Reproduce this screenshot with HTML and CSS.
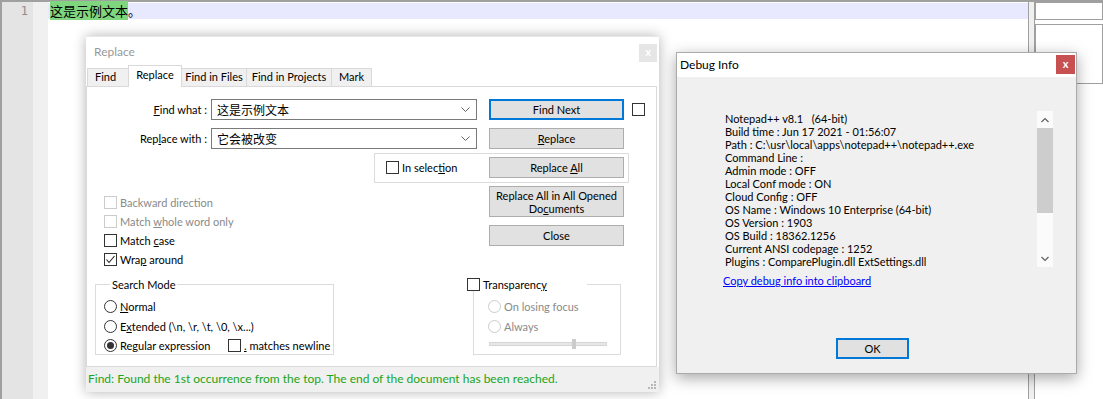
FILE: index.html
```html
<!DOCTYPE html>
<html lang="en">
<head>
  <meta charset="UTF-8">
  <title>Notepad++ - Replace</title>
  <link rel="stylesheet" href="styles.css">
</head>
<body>
  <div class="editor">
    <div class="linenums"><div class="ln">1</div></div>
    <div class="fold"></div>
    <div class="text">
      <div class="line current"><span class="found">这是示例文本</span>。</div>
    </div>
    <div class="split"></div>
    <div class="side">
      <div class="side-box"></div>
      <div class="side-box tall"></div>
    </div>
  </div>

  <!-- Replace dialog -->
  <div class="win replace">
    <div class="rp-title">
      <span>Replace</span>
      <span class="rp-x">x</span>
    </div>
    <div class="tabs">
      <span class="tab t-find">Find</span>
      <span class="tab t-replace active">Replace</span>
      <span class="tab t-files">Find in Files</span>
      <span class="tab t-proj">Find in Projects</span>
      <span class="tab t-mark">Mark</span>
    </div>
    <div class="panel">
      <div class="row">
        <label class="lbl"><u>F</u>ind what :</label>
        <div class="combo"><span>这是示例文本</span><svg class="chev" width="9" height="5" viewBox="0 0 9 5"><path d="M0.5 0.5 L4.5 4.5 L8.5 0.5" fill="none" stroke="#606060"/></svg></div>
        <button class="btn default">Find Next</button>
        <span class="chk"></span>
      </div>
      <div class="row row2">
        <label class="lbl">Rep<u>l</u>ace with :</label>
        <div class="combo"><span>它会被改变</span><svg class="chev" width="9" height="5" viewBox="0 0 9 5"><path d="M0.5 0.5 L4.5 4.5 L8.5 0.5" fill="none" stroke="#606060"/></svg></div>
        <button class="btn"><u>R</u>eplace</button>
      </div>
      <div class="selbox">
        <label class="opt"><span class="chk"></span><span>In selec<u>t</u>ion</span></label>
        <button class="btn">Replace <u>A</u>ll</button>
      </div>
      <div class="mid">
        <div class="opts">
          <label class="opt off"><span class="chk"></span><span>Backward direction</span></label>
          <label class="opt off"><span class="chk"></span><span>Match <u>w</u>hole word only</span></label>
          <label class="opt"><span class="chk"></span><span>Match <u>c</u>ase</span></label>
          <label class="opt"><span class="chk on"><svg width="11" height="11" viewBox="0 0 11 11"><path d="M1.5 5.5 L4 8.5 L9.5 2" fill="none" stroke="#222" stroke-width="1.1"/></svg></span><span>Wra<u>p</u> around</span></label>
        </div>
        <div class="btncol">
          <button class="btn two"><span class="ln1">Replace All in All Opened</span><span class="ln2">Do<u>c</u>uments</span></button>
          <button class="btn">Close</button>
        </div>
      </div>
      <div class="groups">
        <fieldset class="group mode">
          <legend>Search Mode</legend>
          <label class="opt"><span class="radio"></span><span><u>N</u>ormal</span></label>
          <label class="opt"><span class="radio"></span><span>E<u>x</u>tended (\n, \r, \t, \0, \x...)</span></label>
          <div class="opt">
            <span class="radio sel"></span><span class="regex">Re<u>g</u>ular expression</span>
            <span class="chk"></span><span><u>.</u> matches newline</span>
          </div>
        </fieldset>
        <fieldset class="group transp">
          <legend><span class="chk"></span><span>Transparenc<u>y</u></span></legend>
          <label class="opt off"><span class="radio"></span><span>On losing focus</span></label>
          <label class="opt off"><span class="radio"></span><span>Always</span></label>
          <div class="slider"><span class="thumb"></span></div>
        </fieldset>
      </div>
    </div>
    <div class="status">
      Find: Found the 1st occurrence from the top. The end of the document has been reached.
      <svg class="grip" width="9" height="9" viewBox="0 0 9 9" fill="#b8b8b8">
        <rect x="6" y="0" width="2" height="2"/><rect x="3" y="3" width="2" height="2"/><rect x="6" y="3" width="2" height="2"/>
        <rect x="0" y="6" width="2" height="2"/><rect x="3" y="6" width="2" height="2"/><rect x="6" y="6" width="2" height="2"/>
      </svg>
    </div>
  </div>

  <!-- Debug Info dialog -->
  <div class="win debug">
    <div class="dbg-title">
      <span>Debug Info</span>
      <span class="dbg-x">x</span>
    </div>
    <div class="dbg-body">
      <div class="dbg-edit">
        <pre class="dbg-text">Notepad++ v8.1   (64-bit)
Build time : Jun 17 2021 - 01:56:07
Path : C:\usr\local\apps\notepad++\notepad++.exe
Command Line : 
Admin mode : OFF
Local Conf mode : ON
Cloud Config : OFF
OS Name : Windows 10 Enterprise (64-bit)
OS Version : 1903
OS Build : 18362.1256
Current ANSI codepage : 1252
Plugins : ComparePlugin.dll ExtSettings.dll</pre>
        <div class="sbar">
          <svg class="arr" width="16" height="9" viewBox="0 0 16 9"><path d="M4.5 6 L8 2.5 L11.5 6" fill="none" stroke="#606060" stroke-width="1.2"/></svg>
          <div class="sthumb"></div>
          <svg class="arr down" width="16" height="9" viewBox="0 0 16 9"><path d="M4.5 3 L8 6.5 L11.5 3" fill="none" stroke="#606060" stroke-width="1.2"/></svg>
        </div>
      </div>
      <a class="dbg-link" href="#">Copy debug info into clipboard</a>
      <button class="btn default ok">OK</button>
    </div>
  </div>
</body>
</html>
```

FILE: styles.css
```css
*{
  margin: 0;
  padding: 0;
  box-sizing: border-box;
}
body{
  width: 1103px;
  height: 399px;
  overflow: hidden;
  position: relative;
  background: #fff;
  color: #000;
  font-family: "Segoe UI", Lato, "Noto Sans CJK SC", sans-serif;
  font-size: 11px;
}
u{
  text-decoration: underline;
  text-underline-offset: 1px;
}
button{
  font: inherit;
  color: inherit;
}

/* editor behind the dialogs */
.editor{
  display: flex;
  height: 399px;
  border-top: 2px solid #a0a0a0;
}
.linenums{
  width: 33px;
  background: #e4e4e4;
  border-left: 2px solid #a0a0a0;
  padding-top: 1px;
}
.ln{
  height: 16px;
  line-height: 16px;
  text-align: right;
  padding-right: 5px;
  color: #8c8c8c;
  font-family: "DejaVu Sans Mono", monospace;
  font-size: 12px;
}
.fold{
  width: 15px;
  background: #f0f0f0;
}
.text{
  flex: 1;
  padding-top: 1px;
}
.line{
  height: 16px;
  line-height: 16px;
  padding-left: 2px;
  font-family: "Noto Sans CJK SC", sans-serif;
  font-size: 13px;
}
.current{
  background: #e8e8ff;
}
.found{
  background: #7fd67f;
}
.split{
  width: 7px;
  border-left: 1px solid #a0a0a0;
  border-right: 1px solid #a0a0a0;
  background: #f0f0f0;
}
.side{
  width: 68px;
  background: #fff;
}
.side-box{
  height: 18px;
  border: 1px solid #a0a0a0;
  margin-bottom: 4px;
}
.side-box.tall{
  height: 60px;
}

/* windows */
.win{
  position: absolute;
  background: #fff;
  box-shadow: 0 0 12px rgba(0,0,0,.3);
}

/* replace dialog */
.replace{
  left: 86px;
  top: 36px;
  width: 573px;
  height: 356px;
  border-top: 1px solid #e8e8e8;
}
.rp-title{
  height: 29px;
  display: flex;
  justify-content: space-between;
  padding: 7px 2px 0 8px;
  color: #999;
  font-size: 12px;
}
.rp-x{
  width: 18px;
  height: 18px;
  background: #e6e6e6;
  color: #fff;
  font-weight: bold;
  font-size: 11px;
  line-height: 16px;
  text-align: center;
}
.tabs{
  display: flex;
  align-items: flex-end;
  height: 20px;
  padding-left: 1px;
  position: relative;
  z-index: 1;
}
.tab{
  height: 18px;
  line-height: 16px;
  background: #f0f0f0;
  border: 1px solid #d9d9d9;
  border-bottom: none;
  margin-left: -1px;
  text-align: center;
  white-space: nowrap;
}
.tab.active{
  height: 22px;
  margin-bottom: -1px;
  background: #fff;
  line-height: 18px;
}
.t-find{ width: 42px; margin-left: 0; text-align: left; padding-left: 7px; }
.t-replace{ width: 54px; }
.t-files{ width: 66px; }
.t-proj{ width: 86px; }
.t-mark{ width: 41px; text-align: left; padding-left: 7px; }

.panel{
  height: 281px;
  border: 1px solid #d9d9d9;
  width: 571px;
  padding-top: 12px;
}
.row{
  display: flex;
  align-items: center;
  height: 21px;
}
.row2{
  margin-top: 8px;
}
.lbl{
  width: 120px;
  text-align: right;
  margin-right: 4px;
}
.combo{
  width: 266px;
  height: 21px;
  border: 1px solid #7a7a7a;
  margin-right: 12px;
  padding-left: 5px;
  font-family: "Noto Sans CJK SC", sans-serif;
  font-size: 12px;
  line-height: 19px;
  display: flex;
  justify-content: space-between;
  align-items: center;
}
.chev{
  margin-right: 6px;
}
.btn{
  width: 135px;
  height: 21px;
  background: #e1e1e1;
  border: 1px solid #adadad;
  line-height: 17px;
  text-align: center;
}
.btn.default{
  border: 2px solid #0078d7;
}
.chk{
  display: inline-block;
  width: 13px;
  height: 13px;
  border: 1px solid #333;
  background: #fff;
  flex: none;
}
.row .chk{
  margin-left: 8px;
}
.selbox{
  margin: 4px 0 0 287px;
  width: 255px;
  height: 30px;
  border: 1px solid #dcdcdc;
  display: flex;
  align-items: flex-start;
  padding: 3px 0 0 11px;
}
.selbox .opt{
  width: 103px;
  margin-top: 1px;
}
.opt{
  display: flex;
  align-items: center;
  height: 19px;
  white-space: nowrap;
}
.opt .chk, .opt .radio{
  margin-right: 3px;
}
.opt.off{
  color: #8a8a8a;
}
.opt.off .chk{
  border-color: #cccccc;
}
.mid{
  display: grid;
  grid-template-columns: 402px 135px;
  height: 92px;
  margin-top: 3px;
}
.opts{
  padding: 7px 0 0 17px;
}
.chk.on{
  display: flex;
  align-items: center;
  justify-content: center;
}
.btncol{
  display: flex;
  flex-direction: column;
  gap: 8px;
}
.btn.two{
  height: 31px;
  display: flex;
  flex-direction: column;
  justify-content: center;
  align-items: center;
  line-height: 13px;
  padding: 0 4px;
}
.btn.two span{
  display: block;
  height: 13px;
  overflow: visible;
}
.groups{
  display: flex;
}
.group{
  border: 1px solid #dcdcdc;
  height: 77px;
  min-width: 0;
  padding: 6px 0 0 8px;
}
.group legend{
  padding: 0 2px;
  line-height: 13px;
  margin-left: 6px;
}
.group .opt{
  height: 19.5px;
}
.mode{
  margin-left: 8px;
  width: 239px;
}
.regex{
  width: 108px;
}
.radio{
  display: inline-block;
  width: 13px;
  height: 13px;
  border: 1px solid #333;
  border-radius: 50%;
  background: #fff;
  flex: none;
  position: relative;
}
.radio.sel::after{
  content: "";
  position: absolute;
  left: 2px;
  top: 2px;
  width: 7px;
  height: 7px;
  border-radius: 50%;
  background: #333;
}
.opt.off .radio{
  border-color: #cccccc;
}
.transp{
  margin-left: 139px;
  width: 148px;
  padding: 6px 0 0 14px;
}
.transp legend{
  width: 120px;
  margin-left: -21px;
  padding: 0;
  display: flex;
  align-items: center;
  background: #fff;
}
.transp legend .chk{
  margin-right: 3px;
}
.slider{
  position: relative;
  width: 118px;
  height: 4px;
  margin: 6px 0 0 1px;
  background: #e7e7e7;
  border: 1px solid #d6d6d6;
}
.thumb{
  position: absolute;
  left: 82px;
  top: -4px;
  width: 4px;
  height: 10px;
  background: #cccccc;
}
.status{
  height: 25px;
  background: #f0f0f0;
  color: #1aa51a;
  padding-left: 2px;
  line-height: 24px;
  font-size: 12px;
  position: relative;
}
.grip{
  position: absolute;
  right: 2px;
  bottom: 2px;
}

/* debug dialog */
.debug{
  left: 676px;
  top: 52px;
  width: 401px;
  height: 322px;
  border: 1px solid #aaaaaa;
  box-shadow: 0 4px 14px rgba(0,0,0,.35);
}
.dbg-title{
  height: 24px;
  display: flex;
  justify-content: space-between;
  align-items: flex-start;
  padding-left: 3px;
  line-height: 24px;
  font-size: 12px;
}
.dbg-x{
  width: 19px;
  height: 19px;
  margin: 2px 1px 0 0;
  background: #c75050;
  color: #fff;
  font-weight: bold;
  font-size: 11px;
  line-height: 17px;
  text-align: center;
}
.dbg-body{
  background: #f0f0f0;
  height: 296px;
  padding-top: 34px;
}
.dbg-edit{
  display: flex;
  margin-left: 43px;
  width: 333px;
  height: 156px;
}
.dbg-text{
  flex: 1;
  font: inherit;
  line-height: 13px;
  padding: 1px 0 0 5px;
  white-space: pre;
}
.sbar{
  width: 16px;
  background: #fbfbfb;
  display: flex;
  flex-direction: column;
}
.arr{
  margin-top: 5px;
  flex: none;
}
.sthumb{
  height: 85px;
  margin-top: 3px;
  background: #cdcdcd;
}
.arr.down{
  margin-top: auto;
  margin-bottom: 4px;
}
.dbg-link{
  display: block;
  margin: 7px 0 0 46px;
  line-height: 13px;
  color: #0000ff;
  width: max-content;
}
.ok{
  display: block;
  width: 73px;
  height: 21px;
  margin: 51px 0 0 159px;
}
```
